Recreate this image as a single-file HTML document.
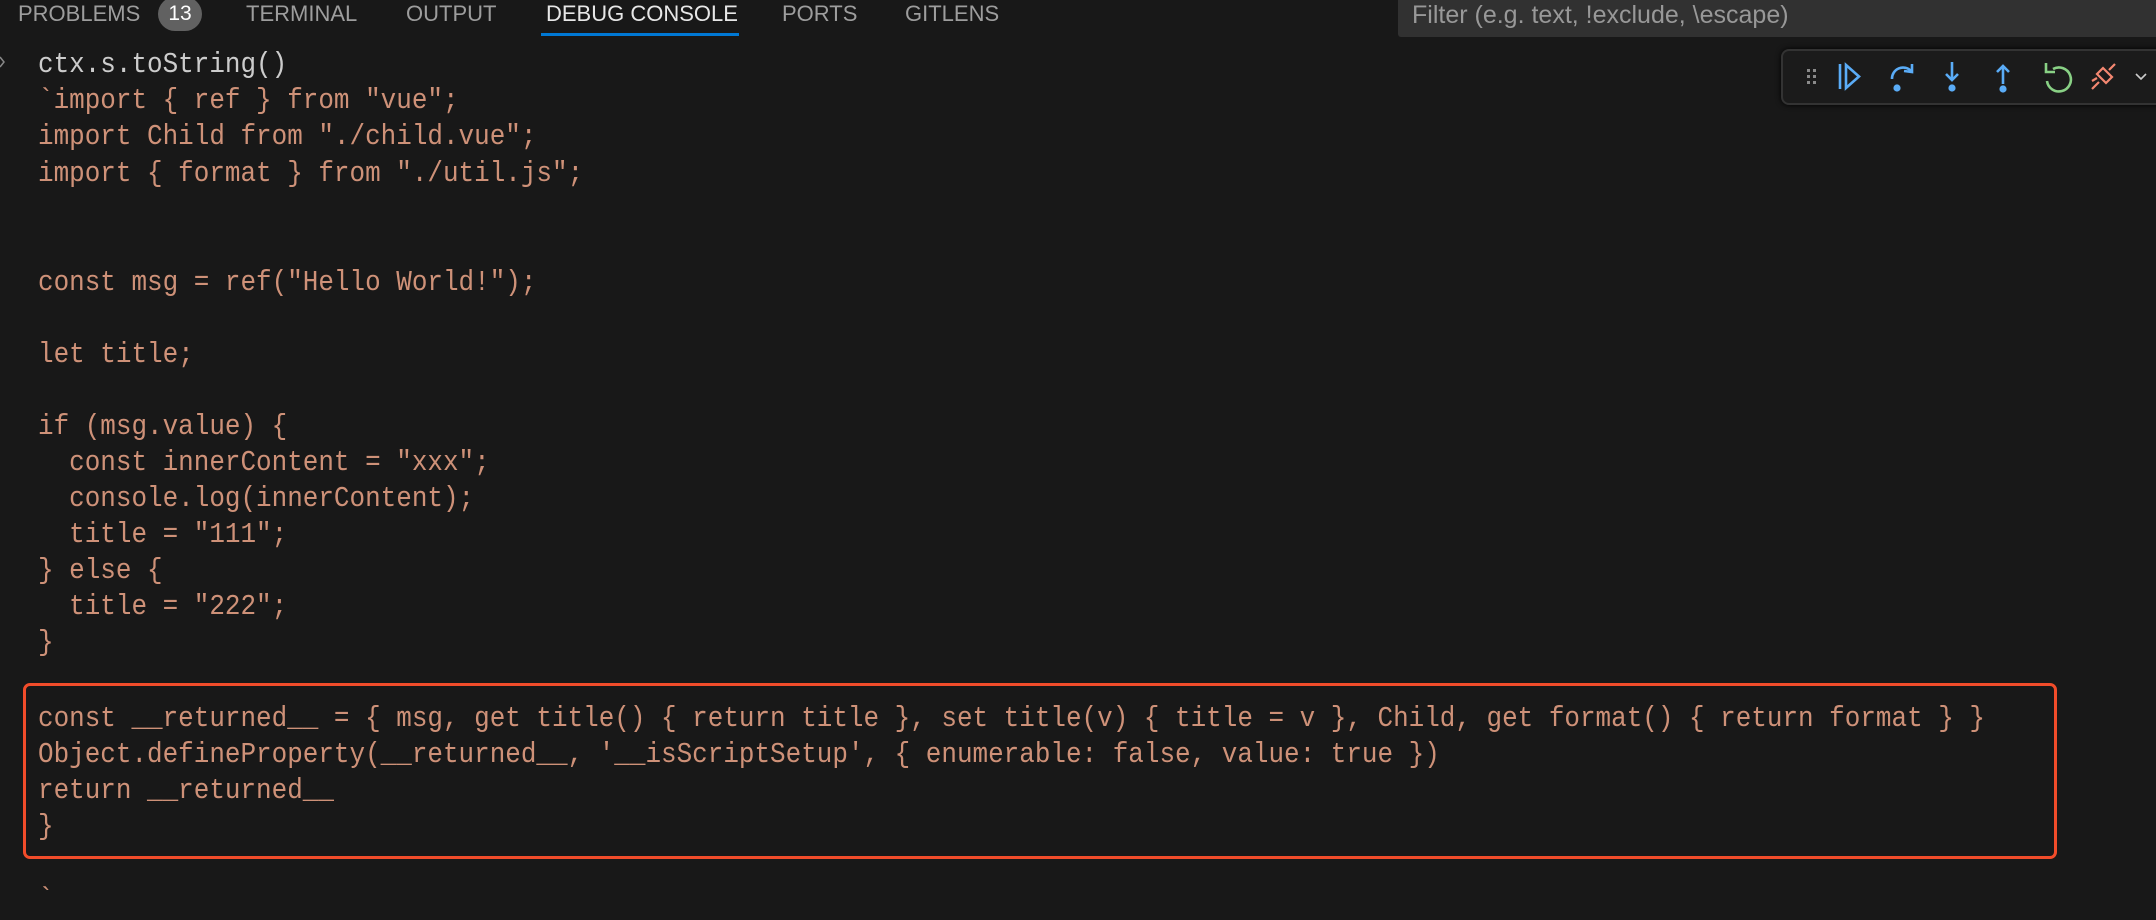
<!DOCTYPE html>
<html><head><meta charset="utf-8"><style>
body{margin:0;width:2156px;height:920px;background:#181818;overflow:hidden;position:relative;font-family:"Liberation Sans",sans-serif}
.tab{position:absolute;top:1px;font-size:22px;color:#9d9d9d}
.l{position:absolute;left:38px;font-family:"Liberation Mono",monospace;font-size:29px;color:#ce9178;white-space:pre;line-height:36px;height:36px;transform:scaleX(0.895);transform-origin:0 0}
</style></head><body>
<div class="tab" style="left:18px">PROBLEMS</div>
<div style="position:absolute;left:158px;top:-3px;width:44px;height:34px;border-radius:17px;background:#616161;color:#fff;font-size:21px;text-align:center;line-height:34px">13</div>
<div class="tab" style="left:246px">TERMINAL</div>
<div class="tab" style="left:406px">OUTPUT</div>
<div class="tab" style="left:546px;color:#e7e7e7">DEBUG CONSOLE</div>
<div style="position:absolute;left:541px;top:33px;width:198px;height:3px;background:#0078d4"></div>
<div class="tab" style="left:782px">PORTS</div>
<div class="tab" style="left:905px">GITLENS</div>
<div style="position:absolute;left:1398px;top:0;width:758px;height:37px;background:#313131;border-radius:0 0 0 3px"></div>
<div style="position:absolute;left:1412px;top:1px;font-size:25px;color:#989898">Filter (e.g. text, !exclude, \escape)</div>
<div style="position:absolute;left:1781px;top:49px;width:400px;height:52px;border:2px solid #333;border-radius:8px;background:#1b1b1b;box-shadow:0 0 6px #000"></div>
<svg style="position:absolute;left:1781px;top:49px" width="375" height="56" viewBox="0 0 375 56">
<g fill="#8a8a8a"><rect x="26" y="20" width="3" height="3"/><rect x="32" y="20" width="3" height="3"/><rect x="26" y="26" width="3" height="3"/><rect x="32" y="26" width="3" height="3"/><rect x="26" y="32" width="3" height="3"/><rect x="32" y="32" width="3" height="3"/></g>
<g stroke="#5aacf7" stroke-width="2.6" fill="none">
<line x1="59" y1="15" x2="59" y2="40"/><path d="M65 16 L78 27.5 L65 39 Z"/>
<path d="M111 30 A11 11 0 0 1 130 22"/><path d="M123 22 L131 23 L131 15"/>
<line x1="171" y1="13" x2="171" y2="31"/><path d="M165 25 L171 31 L177 25"/>
<line x1="222" y1="17" x2="222" y2="35"/><path d="M216 23 L222 17 L228 23"/>
</g>
<g fill="#5aacf7"><circle cx="116" cy="39" r="3.6"/><circle cx="171" cy="39" r="3.6"/><circle cx="222" cy="40" r="3.6"/></g>
<path d="M272 20 A12 12 0 1 1 266 32 M265 14 L265 23 L274 23" stroke="#89d185" stroke-width="2.6" fill="none"/>
<path d="M311 40 L318 33 M316 25 L325 34 L331 28 L322 19 Z M328 21 L334 15 M311 32 L316 29" stroke="#f48771" stroke-width="2.2" fill="none"/>
<path d="M355 25 L360 30 L365 25" stroke="#ccc" stroke-width="1.6" fill="none"/>
</svg>
<svg style="position:absolute;left:0;top:56px" width="6" height="12"><path d="M0 1 L4 6 L0 11" stroke="#888" stroke-width="1.5" fill="none"/></svg>
<div class="l" style="top:47px;color:#cccccc">ctx.s.toString()</div>
<div class="l" style="top:83px">`import { ref } from "vue";</div>
<div class="l" style="top:119px">import Child from "./child.vue";</div>
<div class="l" style="top:156px">import { format } from "./util.js";</div>
<div class="l" style="top:265px">const msg = ref("Hello World!");</div>
<div class="l" style="top:337px">let title;</div>
<div class="l" style="top:409px">if (msg.value) {</div>
<div class="l" style="top:445px">  const innerContent = "xxx";</div>
<div class="l" style="top:481px">  console.log(innerContent);</div>
<div class="l" style="top:517px">  title = "111";</div>
<div class="l" style="top:553px">} else {</div>
<div class="l" style="top:589px">  title = "222";</div>
<div class="l" style="top:625px">}</div>
<div style="position:absolute;left:23px;top:683px;width:2028px;height:170px;border:3px solid #f14c2a;border-radius:7px"></div>
<div class="l" style="top:701px">const __returned__ = { msg, get title() { return title }, set title(v) { title = v }, Child, get format() { return format } }</div>
<div class="l" style="top:737px">Object.defineProperty(__returned__, '__isScriptSetup', { enumerable: false, value: true })</div>
<div class="l" style="top:773px">return __returned__</div>
<div class="l" style="top:809px">}</div>
<div class="l" style="top:882px">`</div>
</body></html>
